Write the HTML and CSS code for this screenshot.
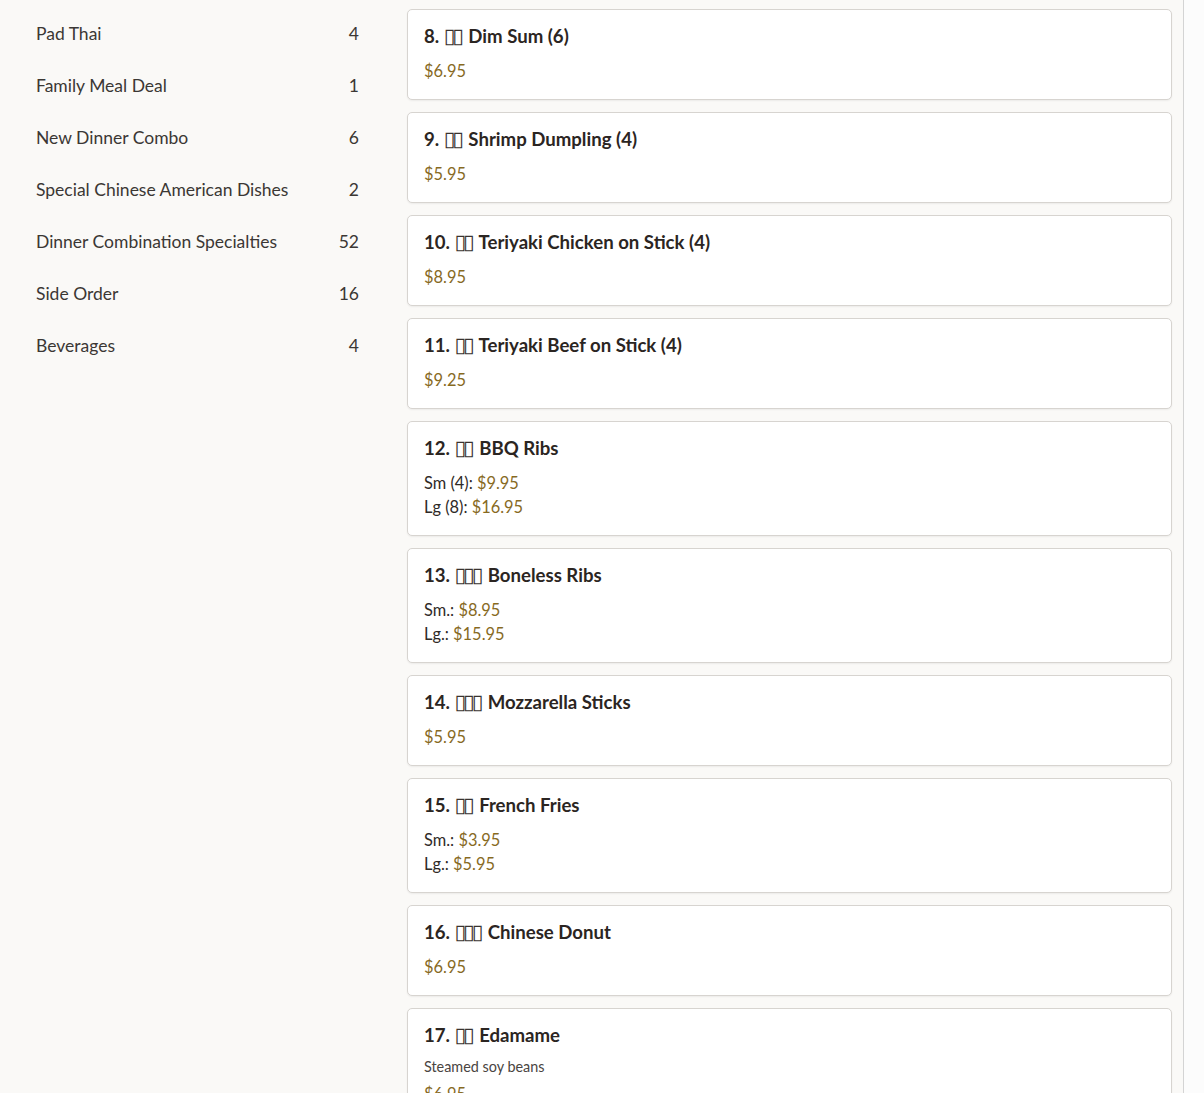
FILE: index.html
```html
<!DOCTYPE html>
<html lang="en">
<head>
<meta charset="utf-8">
<title>Menu</title>
<link rel="stylesheet" href="styles.css">
</head>
<body>
<div class="page">
  <aside class="sidebar">
    <ul class="cats">
      <li class="cat"><span class="cat-name">Pad Thai</span><span class="cat-count">4</span></li>
      <li class="cat"><span class="cat-name">Family Meal Deal</span><span class="cat-count">1</span></li>
      <li class="cat"><span class="cat-name">New Dinner Combo</span><span class="cat-count">6</span></li>
      <li class="cat"><span class="cat-name">Special Chinese American Dishes</span><span class="cat-count">2</span></li>
      <li class="cat"><span class="cat-name">Dinner Combination Specialties</span><span class="cat-count">52</span></li>
      <li class="cat"><span class="cat-name">Side Order</span><span class="cat-count">16</span></li>
      <li class="cat"><span class="cat-name">Beverages</span><span class="cat-count">4</span></li>
    </ul>
  </aside>
  <main class="items">
    <div class="card">
      <h3 class="title">8. <span class="zh">▯▯</span> Dim Sum (6)</h3>
      <div class="prices"><div class="price">$6.95</div></div>
    </div>
    <div class="card">
      <h3 class="title">9. <span class="zh">▯▯</span> Shrimp Dumpling (4)</h3>
      <div class="prices"><div class="price">$5.95</div></div>
    </div>
    <div class="card">
      <h3 class="title">10. <span class="zh">▯▯</span> Teriyaki Chicken on Stick (4)</h3>
      <div class="prices"><div class="price">$8.95</div></div>
    </div>
    <div class="card">
      <h3 class="title">11. <span class="zh">▯▯</span> Teriyaki Beef on Stick (4)</h3>
      <div class="prices"><div class="price">$9.25</div></div>
    </div>
    <div class="card">
      <h3 class="title">12. <span class="zh">▯▯</span> BBQ Ribs</h3>
      <div class="prices">
        <div><span class="label">Sm (4):</span> <span class="price">$9.95</span></div>
        <div><span class="label">Lg (8):</span> <span class="price">$16.95</span></div>
      </div>
    </div>
    <div class="card">
      <h3 class="title">13. <span class="zh">▯▯▯</span> Boneless Ribs</h3>
      <div class="prices">
        <div><span class="label">Sm.:</span> <span class="price">$8.95</span></div>
        <div><span class="label">Lg.:</span> <span class="price">$15.95</span></div>
      </div>
    </div>
    <div class="card">
      <h3 class="title">14. <span class="zh">▯▯▯</span> Mozzarella Sticks</h3>
      <div class="prices"><div class="price">$5.95</div></div>
    </div>
    <div class="card">
      <h3 class="title">15. <span class="zh">▯▯</span> French Fries</h3>
      <div class="prices">
        <div><span class="label">Sm.:</span> <span class="price">$3.95</span></div>
        <div><span class="label">Lg.:</span> <span class="price">$5.95</span></div>
      </div>
    </div>
    <div class="card">
      <h3 class="title">16. <span class="zh">▯▯▯</span> Chinese Donut</h3>
      <div class="prices"><div class="price">$6.95</div></div>
    </div>
    <div class="card">
      <h3 class="title">17. <span class="zh">▯▯</span> Edamame</h3>
      <p class="desc">Steamed soy beans</p>
      <div class="prices"><div class="price">$6.95</div></div>
    </div>
  </main>
  <div class="scrollbar"></div>
</div>
</body>
</html>
```
FILE: styles.css
```css
html, body {
  margin: 0;
  height: 100%;
  overflow: hidden;
}
body {
  background: #faf9f7;
  font-family: Lato, "Noto Sans", sans-serif;
  color: #3a3633;
}
.page {
  display: flex;
  align-items: flex-start;
  height: 1093px;
  overflow: hidden;
}
.sidebar {
  flex: 0 0 323px;
  padding: 7px 0 0 36px;
}
.cats {
  list-style: none;
  margin: 0;
  padding: 0;
}
.cat {
  display: flex;
  justify-content: space-between;
  align-items: center;
  height: 52px;
  font-size: 17.5px;
  color: #3b3734;
}
.items {
  flex: 0 0 765px;
  margin-left: 48px;
  padding-top: 9px;
  display: flex;
  flex-direction: column;
  gap: 12px;
}
.card {
  background: #fff;
  border: 1px solid #d7d4d0;
  border-radius: 5px;
  box-shadow: 0 1px 2px rgba(0, 0, 0, 0.06);
  padding: 16px;
}
.title {
  margin: 0 0 13px;
  font-size: 18.6px;
  line-height: 20px;
  height: 20px;
  font-weight: 700;
  color: #2b2522;
  white-space: nowrap;
}
.zh {
  font-weight: 400;
  font-family: "DejaVu Sans", sans-serif;
  font-size: 21px;
  line-height: 0;
  letter-spacing: -3px;
  margin-right: 3px;
  color: #3a3330;
}
.prices {
  font-size: 16.4px;
  line-height: 24px;
}
.label {
  color: #2f2a27;
}
.price {
  color: #876a1f;
}
.desc {
  margin: -1px 0 5px;
  font-size: 14.4px;
  line-height: 20px;
  color: #4a4542;
}
.scrollbar {
  margin-left: auto;
  width: 20px;
  height: 1093px;
  border-left: 1px solid #d4d4d4;
  background: #fcfcfc;
}
```
